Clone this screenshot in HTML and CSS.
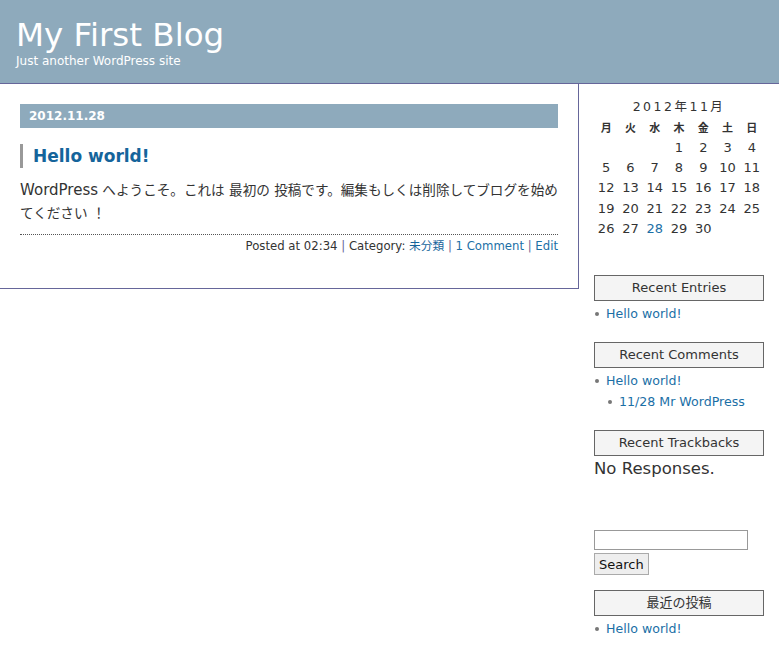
FILE: index.html
```html
<!DOCTYPE html>
<html lang="ja">
<head>
    <meta charset="utf-8">
    <title>My First Blog</title>
    <link rel="stylesheet" href="styles.css">
</head>
<body>
    <div class="header">
        <h1 class="blog-title">My First Blog</h1>
        <div class="tagline">Just another WordPress site</div>
    </div>

    <div class="wrap">
        <div class="content">
            <div class="post">
                <div class="date">2012.11.28</div>
                <h2 class="post-title"><a href="#">Hello world!</a></h2>
                <div class="entry">
                    <p><span class="en">WordPress</span> へようこそ。これは 最初の 投稿です。編集もしくは削除してブログを始めてください ！</p>
                </div>
                <div class="meta">
                    Posted at 02:34 <span class="sep">|</span> Category: <a href="#" class="cat">未分類</a> <span class="sep">|</span> <a href="#">1 Comment</a> <span class="sep">|</span> <a href="#">Edit</a>
                </div>
            </div>
        </div>

        <div class="sidebar">
            <table class="calendar">
                <caption>2012年11月</caption>
                <thead>
                    <tr><th>月</th><th>火</th><th>水</th><th>木</th><th>金</th><th>土</th><th>日</th></tr>
                </thead>
                <tbody>
                    <tr><td></td><td></td><td></td><td>1</td><td>2</td><td>3</td><td>4</td></tr>
                    <tr><td>5</td><td>6</td><td>7</td><td>8</td><td>9</td><td>10</td><td>11</td></tr>
                    <tr><td>12</td><td>13</td><td>14</td><td>15</td><td>16</td><td>17</td><td>18</td></tr>
                    <tr><td>19</td><td>20</td><td>21</td><td>22</td><td>23</td><td>24</td><td>25</td></tr>
                    <tr><td>26</td><td>27</td><td><a href="#">28</a></td><td>29</td><td>30</td><td></td><td></td></tr>
                </tbody>
            </table>

            <div class="widget">
                <h3 class="widget-title">Recent Entries</h3>
                <ul>
                    <li><a href="#">Hello world!</a></li>
                </ul>
            </div>

            <div class="widget">
                <h3 class="widget-title">Recent Comments</h3>
                <ul>
                    <li><a href="#">Hello world!</a>
                        <ul>
                            <li><a href="#">11/28 Mr WordPress</a></li>
                        </ul>
                    </li>
                </ul>
            </div>

            <div class="widget">
                <h3 class="widget-title">Recent Trackbacks</h3>
                <p class="no-resp">No Responses.</p>
            </div>

            <form class="search">
                <input type="text" class="search-box">
                <button type="button" class="search-btn">Search</button>
            </form>

            <div class="widget">
                <h3 class="widget-title">最近の投稿</h3>
                <ul>
                    <li><a href="#">Hello world!</a></li>
                </ul>
            </div>
        </div>
    </div>
</body>
</html>
```

FILE: styles.css
```css
/* Base page */
body {
    margin: 0;
    font-family: "DejaVu Sans", Verdana, "Noto Sans CJK JP", sans-serif;
    color: #333;
    background: #fff;
}

a {
    color: #1b6fa6;
    text-decoration: none;
}

/* Header */
.header {
    background-color: #8eaabc;
    border-bottom: 1px solid #66669a;
    height: 84px;
    padding: 0 16px;
    box-sizing: border-box;
    color: #fff;
}

.blog-title {
    margin: 0;
    padding-top: 16px;
    font-size: 32.5px;
    font-weight: normal;
    line-height: 38px;
}

.tagline {
    font-size: 12px;
    line-height: 14px;
}

/* Two columns */
.wrap {
    display: flex;
    align-items: flex-start;
}

.content {
    width: 579px;
    box-sizing: border-box;
    padding: 20px 20px 33px 20px;
    border-right: 1px solid #66669a;
    border-bottom: 1px solid #66669a;
}

.date {
    background-color: #8eaabc;
    color: #fff;
    font-weight: bold;
    font-size: 12px;
    line-height: 24px;
    padding-left: 9px;
}

.post-title {
    margin: 16px 0 0 0;
    border-left: 3px solid #999;
    padding-left: 10px;
    font-size: 17px;
    line-height: 24px;
}

.post-title a {
    color: #15649b;
}

.entry p {
    margin: 11px 0 0 0;
    font-size: 13.6px;
    line-height: 23px;
    font-family: "DejaVu Sans", "Noto Sans CJK JP", sans-serif;
}

.entry .en {
    font-size: 15px;
    line-height: 20px;
}

.meta {
    margin-top: 9px;
    border-top: 1px dotted #555;
    padding-top: 3px;
    text-align: right;
    font-size: 11.7px;
    line-height: 17px;
}

.meta .sep {
    color: #66669a;
}

.meta .cat {
    color: #15649b;
}

/* Sidebar */
.sidebar {
    width: 170px;
    margin-left: 15px;
    padding-top: 15px;
    font-size: 12.6px;
}

.calendar {
    border-collapse: collapse;
    width: 170px;
    font-size: 13px;
}

.calendar caption {
    font-size: 12.5px;
    letter-spacing: 2.5px;
    line-height: 16px;
    padding-bottom: 2px;
}

.calendar th {
    font-size: 11px;
    font-weight: bold;
    height: 20px;
    padding: 0;
    text-align: center;
}

.calendar td {
    height: 20.3px;
    padding: 0;
    text-align: center;
}

.widget {
    margin-top: 37px;
}

.widget + .widget {
    margin-top: 18px;
}

.widget-title {
    margin: 0;
    border: 1px solid #666;
    background: #f4f4f4;
    font-size: 13px;
    font-weight: normal;
    text-align: center;
    line-height: 24px;
}

.widget ul {
    list-style: none;
    margin: 0;
    padding: 0;
}

.widget > ul {
    margin-top: 2px;
}

.widget li {
    position: relative;
    padding-left: 12px;
    line-height: 21px;
}

.widget li::before {
    content: "";
    position: absolute;
    left: 1px;
    top: 9px;
    width: 4px;
    height: 4px;
    border-radius: 50%;
    background: #777;
}

.widget li ul {
    padding-left: 1px;
}

.no-resp {
    margin: 1px 0 0 0;
    font-size: 16.5px;
    line-height: 24px;
}

.search {
    margin-top: 49px;
}

.search-box {
    display: block;
    width: 154px;
    height: 20px;
    box-sizing: border-box;
    border: 1px solid #999;
    margin: 0 0 3px 0;
}

.search-btn {
    display: block;
    font-family: "DejaVu Sans", sans-serif;
    font-size: 13px;
    height: 22px;
    padding: 0 4px;
    border: 1px solid #aaa;
    background: #eee;
    color: #111;
}

.search + .widget {
    margin-top: 15px;
}
```
